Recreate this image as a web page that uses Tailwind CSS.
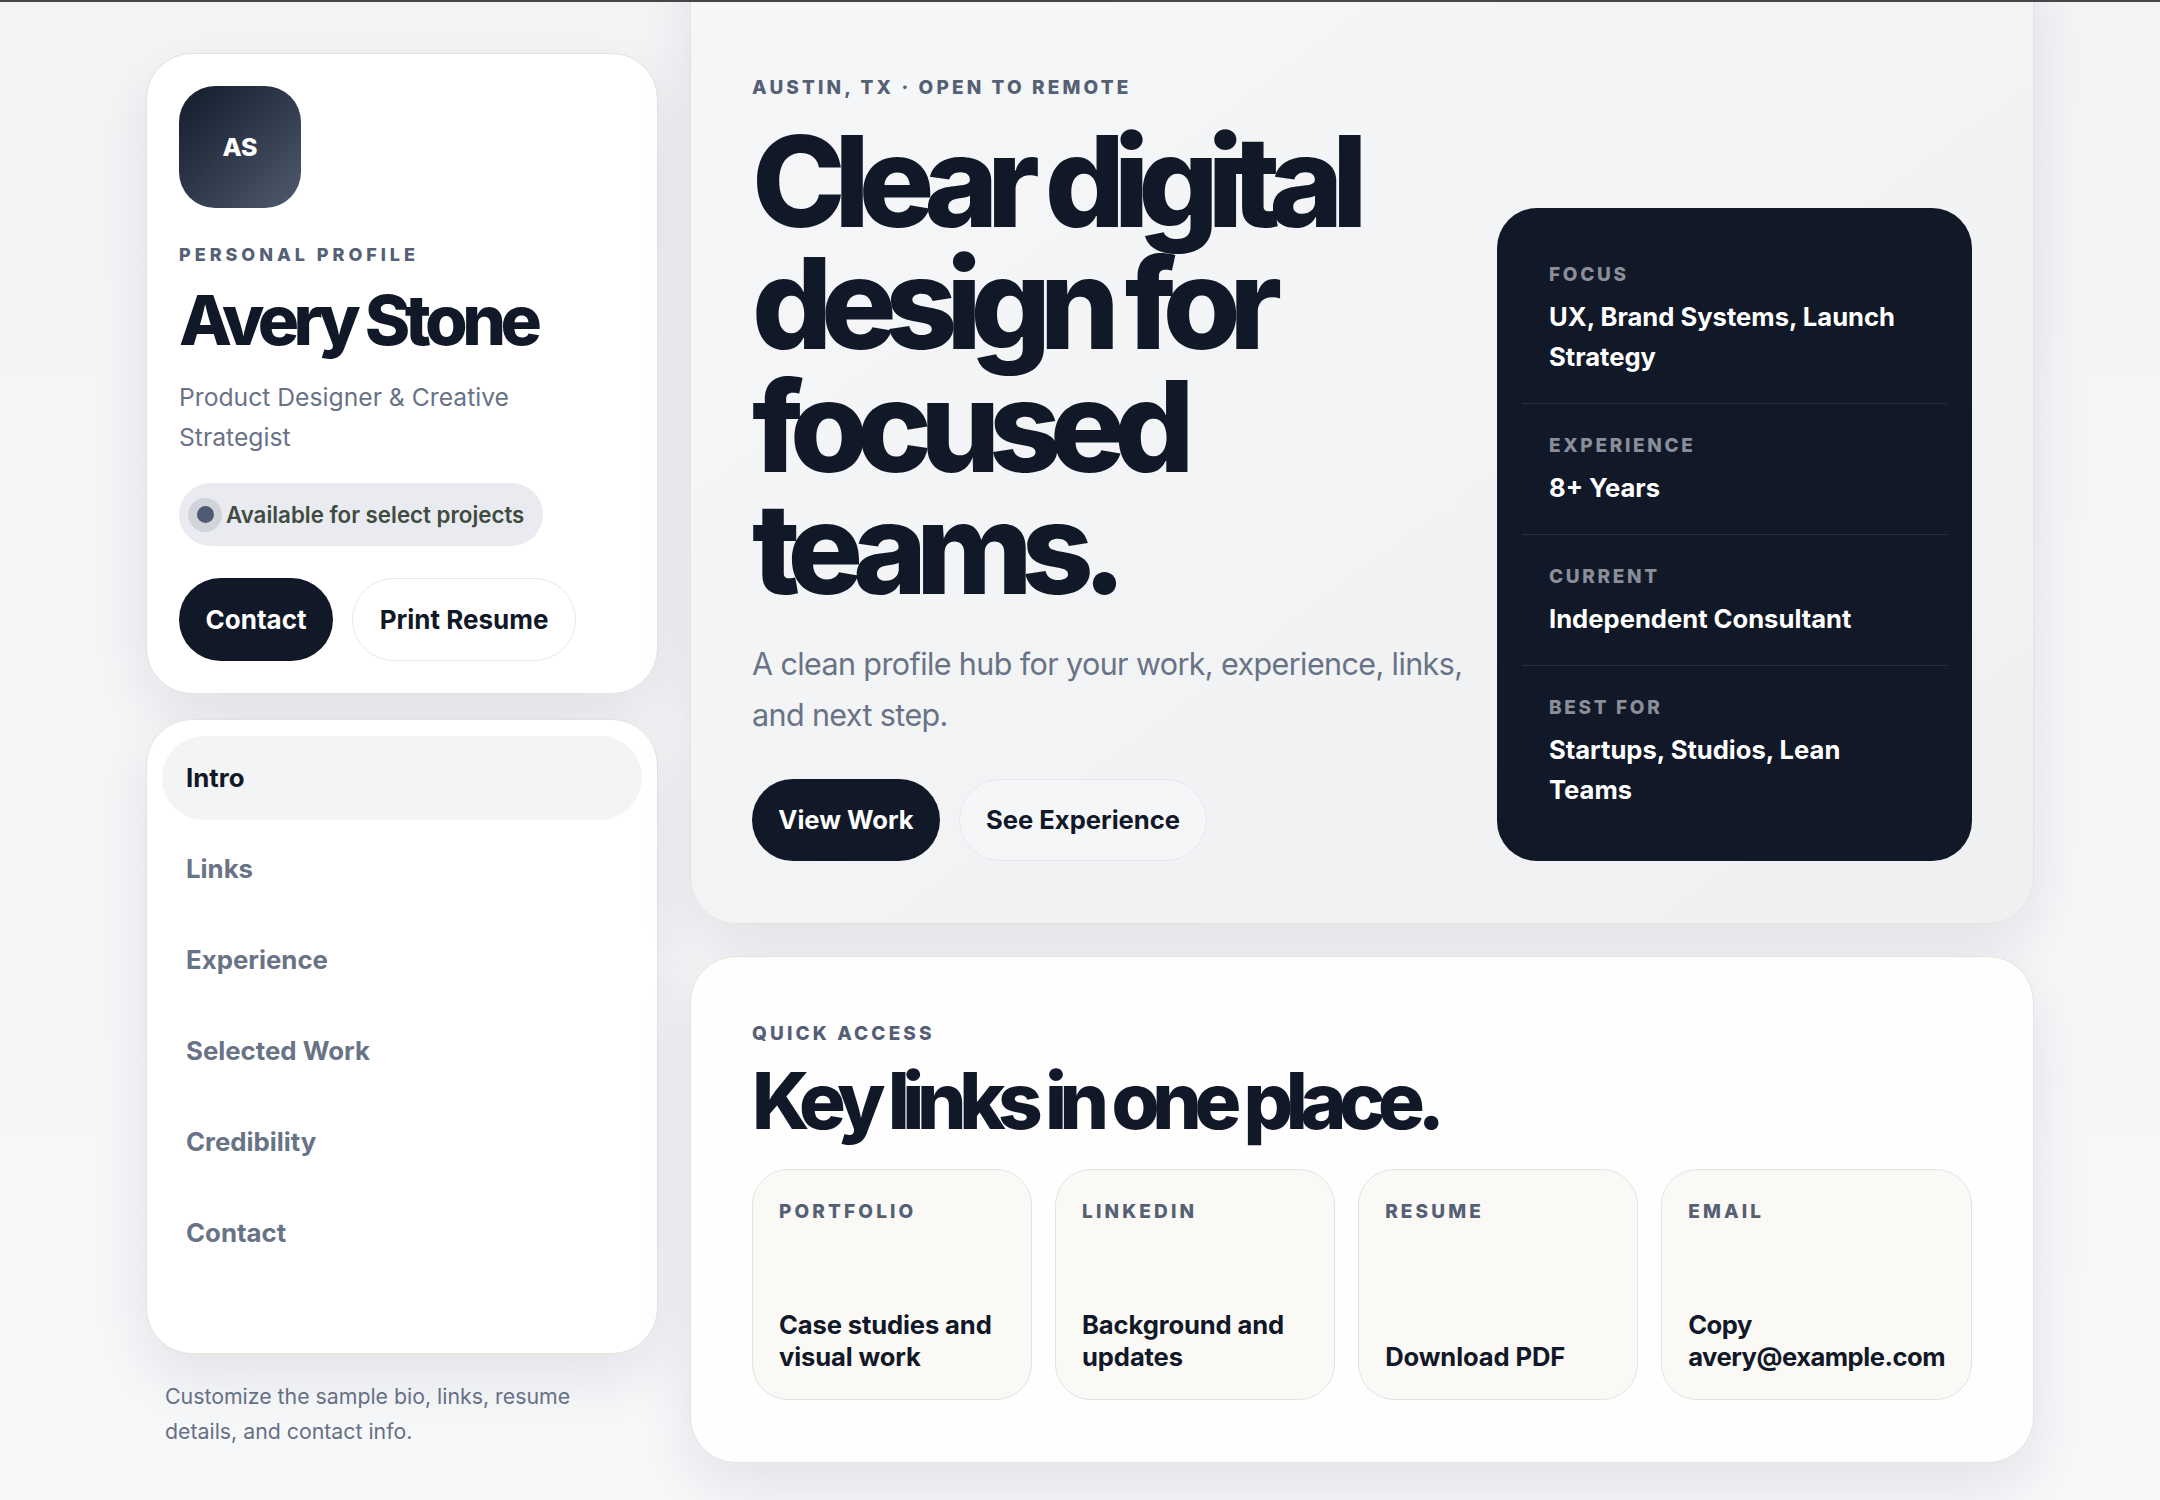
<!DOCTYPE html>
<html lang="en">
<head>
    <meta charset="UTF-8">
    <title>Avery Stone</title>
    <script src="https://cdn.jsdelivr.net/npm/@tailwindcss/browser@4"></script>
</head>
<body class="h-[1500px] overflow-hidden bg-gradient-to-b from-[#f3f4f6] to-[#f7f8fa] [font-family:Inter,sans-serif] text-[#111827]">

    <!-- Top edge line -->
    <div class="absolute top-0 left-0 z-10 h-[2px] w-full bg-[#444746]"></div>

    <div class="flex items-start gap-[32px] pl-[146px]">

        <!-- Sidebar -->
        <aside class="mt-[53px] w-[512px] shrink-0">
            <div class="rounded-[46px] border border-[#e5e3db] bg-white p-[32px] shadow-[0_24px_60px_rgba(17,24,39,0.09)]">
                <div class="flex h-[122px] w-[122px] items-center justify-center rounded-[36px] bg-gradient-to-br from-[#141c2b] to-[#4f5b6e] pt-[2px] text-[25px] font-extrabold text-white">AS</div>
                <p class="mt-[33px] text-[18px] leading-[28px] font-extrabold tracking-[0.22em] text-[#556075]">PERSONAL PROFILE</p>
                <h2 class="mt-[11px] text-[69px] leading-[80px] font-extrabold tracking-[-0.08em]">Avery Stone</h2>
                <p class="mt-[17px] text-[24.7px] leading-[40px] text-[#697386]">Product Designer &amp; Creative Strategist</p>
                <div class="mt-[26px] flex h-[63px] w-fit items-center gap-[4px] rounded-full bg-[#e9ebf0] pr-[19px] pl-[9px] text-[22.3px] font-semibold text-[#3f4c3f]">
                    <span class="flex h-[34px] w-[34px] items-center justify-center rounded-full bg-[#d1d5db]"><span class="h-[17px] w-[17px] rounded-full bg-[#4f5b70]"></span></span>
                    Available for select projects
                </div>
                <div class="mt-[32px] flex gap-[19px] text-[26px] font-bold">
                    <a class="flex h-[83px] w-[154px] items-center justify-center rounded-full bg-[#111827] text-white">Contact</a>
                    <a class="flex h-[83px] w-[224px] items-center justify-center rounded-full border border-[#e5e7eb] bg-white">Print Resume</a>
                </div>
            </div>

            <nav class="mt-[25px] flex h-[635px] flex-col gap-[7px] rounded-[46px] border border-[#e5e3db] bg-white px-[15px] pt-[16px] pb-[15px] text-[25.8px] font-bold text-[#697386] shadow-[0_24px_60px_rgba(17,24,39,0.09)]">
                <a class="flex h-[84px] shrink-0 items-center rounded-full bg-[#f3f4f6] px-[24px] text-[#111827]">Intro</a>
                <a class="flex h-[84px] shrink-0 items-center px-[24px]">Links</a>
                <a class="flex h-[84px] shrink-0 items-center px-[24px]">Experience</a>
                <a class="flex h-[84px] shrink-0 items-center px-[24px]">Selected Work</a>
                <a class="flex h-[84px] shrink-0 items-center px-[24px]">Credibility</a>
                <a class="flex h-[84px] shrink-0 items-center px-[24px]">Contact</a>
            </nav>

            <p class="mt-[25px] px-[19px] text-[21.3px] leading-[34.5px] text-[#667085]">Customize the sample bio, links, resume details, and contact info.</p>
        </aside>

        <!-- Main -->
        <main class="w-[1344px] shrink-0">
            <section class="-mt-[60px] flex items-end justify-between rounded-[46px] border border-[#e5e3db] bg-gradient-to-br from-[#f6f7f8] to-[#eef0f2] pt-[132px] pr-[61px] pb-[62px] pl-[61px] shadow-[0_24px_60px_rgba(17,24,39,0.09)]">
                <div class="w-[725px]">
                    <p class="text-[19px] leading-[30px] font-extrabold tracking-[0.165em] text-[#556075]">AUSTIN, TX · OPEN TO REMOTE</p>
                    <h1 class="mt-[17px] text-[126px] leading-[122.4px] font-extrabold tracking-[-0.09em]">Clear digital design for focused teams.</h1>
                    <p class="mt-[28px] text-[30.5px] leading-[51px] tracking-[-0.02em] text-[#697386]">A clean profile hub for your work, experience, links, and next step.</p>
                    <div class="mt-[39px] flex gap-[19px] text-[25.6px] font-bold">
                        <a class="flex h-[82px] w-[188px] items-center justify-center rounded-full bg-[#111827] pt-[2px] text-white">View Work</a>
                        <a class="flex h-[82px] w-[248px] items-center justify-center rounded-full border border-[#e5e7eb] bg-[#f5f6f7] pt-[2px]">See Experience</a>
                    </div>
                </div>

                <div class="w-[475px] rounded-[40px] bg-[#111827] p-[25px] text-[25.6px] leading-[40px] font-[650] text-white">
                    <div class="border-b border-white/10 px-[27px] py-[26px]">
                        <p class="mb-[6px] text-[19px] leading-[32px] font-extrabold tracking-[0.14em] text-[#8a8e98]">FOCUS</p>
                        <p>UX, Brand Systems, Launch Strategy</p>
                    </div>
                    <div class="border-b border-white/10 px-[27px] py-[26px]">
                        <p class="mb-[6px] text-[19px] leading-[32px] font-extrabold tracking-[0.14em] text-[#8a8e98]">EXPERIENCE</p>
                        <p>8+ Years</p>
                    </div>
                    <div class="border-b border-white/10 px-[27px] py-[26px]">
                        <p class="mb-[6px] text-[19px] leading-[32px] font-extrabold tracking-[0.14em] text-[#8a8e98]">CURRENT</p>
                        <p>Independent Consultant</p>
                    </div>
                    <div class="px-[27px] py-[26px]">
                        <p class="mb-[6px] text-[19px] leading-[32px] font-extrabold tracking-[0.14em] text-[#8a8e98]">BEST FOR</p>
                        <p>Startups, Studios, Lean Teams</p>
                    </div>
                </div>
            </section>

            <section class="mt-[32px] rounded-[46px] border border-[#e5e3db] bg-[#fffefe] px-[61px] pt-[62px] pb-[62px] shadow-[0_24px_60px_rgba(17,24,39,0.09)]">
                <p class="text-[19px] leading-[30px] font-extrabold tracking-[0.165em] text-[#556075]">QUICK ACCESS</p>
                <h2 class="mt-[12px] text-[78px] leading-[80px] font-extrabold tracking-[-0.095em]">Key links in one place.</h2>
                <div class="mt-[28px] grid grid-cols-[repeat(4,1fr)] gap-[23px]">
                    <a class="flex h-[231px] flex-col justify-between rounded-[36px] border border-[#e2e3e8] bg-[#fbf9f5] px-[26px] pt-[27px] pb-[26px]">
                        <span class="text-[19px] leading-[30px] font-extrabold tracking-[0.165em] text-[#556075]">PORTFOLIO</span>
                        <span class="text-[25.6px] leading-[32px] font-[650] tracking-[-0.005em]">Case studies and visual work</span>
                    </a>
                    <a class="flex h-[231px] flex-col justify-between rounded-[36px] border border-[#e2e3e8] bg-[#fbf9f5] px-[26px] pt-[27px] pb-[26px]">
                        <span class="text-[19px] leading-[30px] font-extrabold tracking-[0.165em] text-[#556075]">LINKEDIN</span>
                        <span class="text-[25.6px] leading-[32px] font-[650] tracking-[-0.005em]">Background and updates</span>
                    </a>
                    <a class="flex h-[231px] flex-col justify-between rounded-[36px] border border-[#e2e3e8] bg-[#fbf9f5] px-[26px] pt-[27px] pb-[26px]">
                        <span class="text-[19px] leading-[30px] font-extrabold tracking-[0.165em] text-[#556075]">RESUME</span>
                        <span class="text-[25.6px] leading-[32px] font-[650] tracking-[-0.005em]">Download PDF</span>
                    </a>
                    <a class="flex h-[231px] flex-col justify-between rounded-[36px] border border-[#e2e3e8] bg-[#fbf9f5] px-[26px] pt-[27px] pb-[26px]">
                        <span class="text-[19px] leading-[30px] font-extrabold tracking-[0.165em] text-[#556075]">EMAIL</span>
                        <span class="text-[25.6px] leading-[32px] font-[650] tracking-[-0.02em]">Copy avery@example.com</span>
                    </a>
                </div>
            </section>
        </main>
    </div>
</body>
</html>
